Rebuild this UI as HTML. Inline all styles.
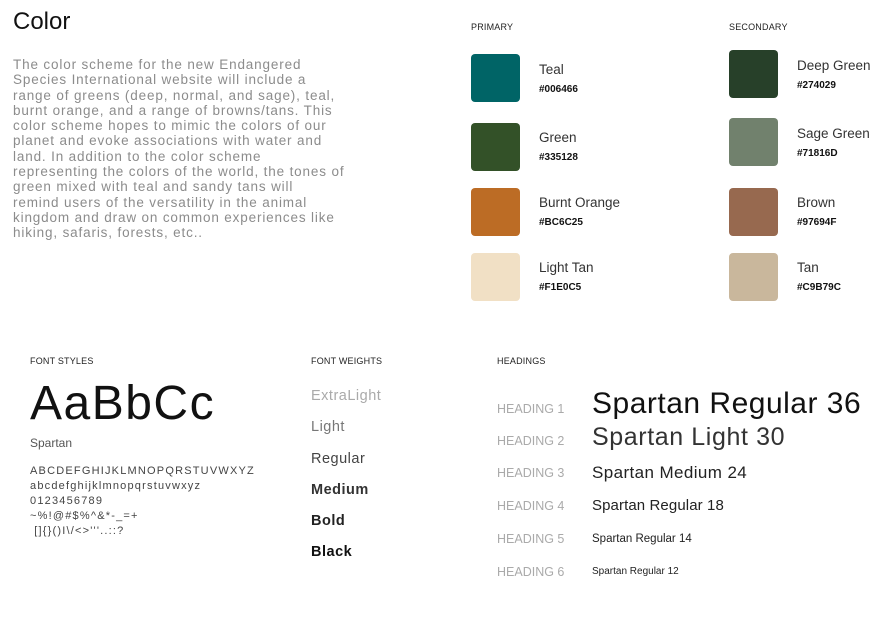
<!DOCTYPE html>
<html><head><meta charset="utf-8"><style>
*{margin:0;padding:0;box-sizing:border-box}
body{width:880px;height:623px;background:#fff;position:relative;overflow:hidden;font-family:"Liberation Sans",sans-serif;color:#111}
.a{position:absolute;white-space:nowrap}
.sw{position:absolute;width:49px;height:48px;border-radius:4px}
.nm{position:absolute;font-size:13.5px;color:#333}
.hx{position:absolute;font-size:10px;font-weight:bold;color:#111}
.lb{position:absolute;font-size:9px;color:#222;letter-spacing:.2px}
.hl{position:absolute;font-size:12.5px;color:#aaa;left:497px}
.ht{position:absolute;left:592px;color:#222;white-space:nowrap;line-height:1}
.fw{position:absolute;left:311px;font-size:14.5px;color:#444;letter-spacing:.5px}
</style></head><body>
<div class="a" style="left:13px;top:8px;font-size:24px;color:#111">Color</div>
<div class="a" style="left:13px;top:57px;font-size:13.5px;line-height:15.3px;color:#8c8c8c;letter-spacing:.85px;white-space:normal;width:360px">The color scheme for the new Endangered<br>Species International website will include a<br>range of greens (deep, normal, and sage), teal,<br>burnt orange, and a range of browns/tans. This<br>color scheme hopes to mimic the colors of our<br>planet and evoke associations with water and<br>land. In addition to the color scheme<br>representing the colors of the world, the tones of<br>green mixed with teal and sandy tans will<br>remind users of the versatility in the animal<br>kingdom and draw on common experiences like<br>hiking, safaris, forests, etc..</div>

<div class="lb" style="left:471px;top:22px">PRIMARY</div>
<div class="lb" style="left:729px;top:22px">SECONDARY</div>

<div class="sw" style="left:471px;top:54px;background:#006466"></div>
<div class="nm" style="left:539px;top:62px">Teal</div><div class="hx" style="left:539px;top:84px">#006466</div>
<div class="sw" style="left:471px;top:123px;background:#335128"></div>
<div class="nm" style="left:539px;top:130px">Green</div><div class="hx" style="left:539px;top:152px">#335128</div>
<div class="sw" style="left:471px;top:188px;background:#BC6C25"></div>
<div class="nm" style="left:539px;top:195px">Burnt Orange</div><div class="hx" style="left:539px;top:217px">#BC6C25</div>
<div class="sw" style="left:471px;top:253px;background:#F1E0C5"></div>
<div class="nm" style="left:539px;top:260px">Light Tan</div><div class="hx" style="left:539px;top:282px">#F1E0C5</div>

<div class="sw" style="left:729px;top:50px;background:#274029"></div>
<div class="nm" style="left:797px;top:58px">Deep Green</div><div class="hx" style="left:797px;top:80px">#274029</div>
<div class="sw" style="left:729px;top:118px;background:#71816D"></div>
<div class="nm" style="left:797px;top:126px">Sage Green</div><div class="hx" style="left:797px;top:148px">#71816D</div>
<div class="sw" style="left:729px;top:188px;background:#97694F"></div>
<div class="nm" style="left:797px;top:195px">Brown</div><div class="hx" style="left:797px;top:217px">#97694F</div>
<div class="sw" style="left:729px;top:253px;background:#C9B79C"></div>
<div class="nm" style="left:797px;top:260px">Tan</div><div class="hx" style="left:797px;top:282px">#C9B79C</div>

<div class="lb" style="left:30px;top:356px">FONT STYLES</div>
<div class="lb" style="left:311px;top:356px">FONT WEIGHTS</div>
<div class="lb" style="left:497px;top:356px">HEADINGS</div>

<div class="a" style="left:30px;top:380px;font-size:48px;line-height:1;color:#111;letter-spacing:1.5px">AaBbCc</div>
<div class="a" style="left:30px;top:436px;font-size:12px;color:#555">Spartan</div>
<div class="a" style="left:30px;top:464px;font-size:11px;line-height:15px;color:#444;letter-spacing:1.2px">ABCDEFGHIJKLMNOPQRSTUVWXYZ<br>abcdefghijklmnopqrstuvwxyz<br>0123456789<br>~%!@#$%^&amp;*-_=+<br>&nbsp;[]{}()I\/&lt;&gt;'''..::?</div>

<div class="fw" style="top:388px;color:#aaa">ExtraLight</div>
<div class="fw" style="top:419px;color:#777">Light</div>
<div class="fw" style="top:451px">Regular</div>
<div class="fw" style="top:482px;font-weight:bold;color:#333">Medium</div>
<div class="fw" style="top:513px;font-weight:bold;color:#222">Bold</div>
<div class="fw" style="top:544px;font-weight:bold;color:#111">Black</div>

<div class="hl" style="top:402px">HEADING 1</div>
<div class="hl" style="top:434px">HEADING 2</div>
<div class="hl" style="top:466px">HEADING 3</div>
<div class="hl" style="top:499px">HEADING 4</div>
<div class="hl" style="top:532px">HEADING 5</div>
<div class="hl" style="top:565px">HEADING 6</div>
<div class="ht" style="top:389px;font-size:30px;letter-spacing:.5px;color:#111">Spartan Regular 36</div>
<div class="ht" style="top:425px;font-size:25px;letter-spacing:.6px;color:#333">Spartan Light 30</div>
<div class="ht" style="top:464px;font-size:17px;letter-spacing:.4px">Spartan Medium 24</div>
<div class="ht" style="top:498px;font-size:15px;letter-spacing:.1px">Spartan Regular 18</div>
<div class="ht" style="top:534px;font-size:11.5px">Spartan Regular 14</div>
<div class="ht" style="top:567px;font-size:10px">Spartan Regular 12</div>
</body></html>
